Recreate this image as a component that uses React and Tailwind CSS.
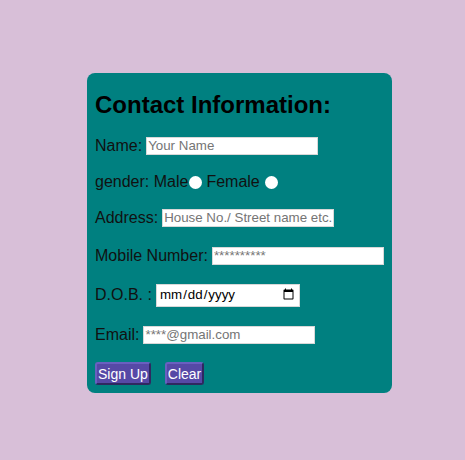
import { useState } from "react";

const inputCls =
    "h-[18px] shrink-0 bg-white border border-[#d8d8d8] px-[1px] text-[13.33px] text-black placeholder:text-[#757575] outline-none";

const btnCls =
    "h-[23px] px-[1px] bg-[#5649a6] text-white text-[14px] leading-none rounded-[3px] border-2 border-[#6a5fc0] border-r-[#2f2860] border-b-[#2f2860]";

const App = () => {
    const [gender, setGender] = useState("");

    return (
        <div className="w-full min-h-[460px] bg-[#d8bfd8] pt-[73px] font-['Liberation_Sans',Arial,sans-serif]">
            <form
                className="ml-[87px] w-[305px] h-[320px] bg-[#008080] rounded-[8px] pt-[18px] px-[8px] text-[16px] text-[#111] whitespace-nowrap"
                onSubmit={(e) => e.preventDefault()}
            >
                <h2 className="text-[24px] leading-[28px] font-bold text-black">Contact Information:</h2>

                <div className="mt-[15px] h-[24px] flex items-center">
                    <span>Name:</span>
                    <input type="text" placeholder="Your Name" className={`${inputCls} ml-[4px] w-[172px]`} />
                </div>

                <div className="mt-[12px] h-[24px] flex items-center">
                    <span>gender: Male</span>
                    <input
                        type="radio"
                        name="gender"
                        checked={gender === "male"}
                        onChange={() => setGender("male")}
                        className="appearance-none w-[13px] h-[13px] rounded-full bg-white ml-[1px] mt-[1px]"
                    />
                    <span className="ml-[4px]">Female</span>
                    <input
                        type="radio"
                        name="gender"
                        checked={gender === "female"}
                        onChange={() => setGender("female")}
                        className="appearance-none w-[13px] h-[13px] rounded-full bg-white ml-[5px] mt-[1px]"
                    />
                </div>

                <div className="mt-[12px] h-[24px] flex items-center">
                    <span>Address:</span>
                    <input
                        type="text"
                        placeholder="House No./ Street name etc."
                        className={`${inputCls} ml-[4px] w-[172px]`}
                    />
                </div>

                <div className="mt-[14px] h-[24px] flex items-center">
                    <span>Mobile Number:</span>
                    <input type="tel" placeholder="**********" className={`${inputCls} ml-[4px] w-[172px]`} />
                </div>

                <div className="mt-[15px] h-[24px] flex items-center">
                    <span>D.O.B. :</span>
                    <input
                        type="date"
                        className="ml-[4px] shrink-0 w-[144px] h-[23px] bg-white border border-[#d8d8d8] px-[2px] text-[13.33px] text-black outline-none"
                    />
                </div>

                <div className="mt-[16px] h-[24px] flex items-center">
                    <span>Email:</span>
                    <input type="email" placeholder="****@gmail.com" className={`${inputCls} ml-[4px] w-[172px]`} />
                </div>

                <div className="mt-[15px] flex items-center gap-[14px]">
                    <button type="submit" className={btnCls}>
                        Sign Up
                    </button>
                    <button type="reset" className={btnCls}>
                        Clear
                    </button>
                </div>
            </form>
        </div>
    );
};

export default App;
